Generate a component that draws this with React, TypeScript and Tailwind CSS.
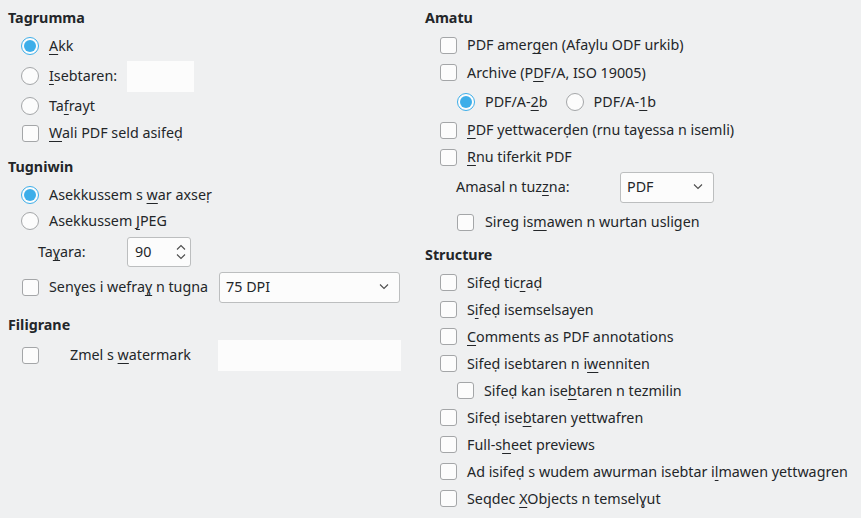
import React from "react";

// "&" marks the mnemonic letter, drawn underlined like a KDE dialog
function Label({ text, className = "" }: { text: string; className?: string }) {
  const i = text.indexOf("&");
  if (i < 0) return <span className={"whitespace-nowrap " + className}>{text}</span>;
  const chars = Array.from(text.slice(i + 1));
  return (
    <span className={"whitespace-nowrap " + className}>
      {text.slice(0, i)}
      <span className="underline decoration-1 underline-offset-[3px]">{chars[0]}</span>
      {chars.slice(1).join("")}
    </span>
  );
}

function Radio({ checked = false }: { checked?: boolean }) {
  return checked ? (
    <span className="flex h-[18px] w-[18px] items-center justify-center rounded-full border border-[#3daee9] bg-[#fcfcfc]">
      <span className="h-[12px] w-[12px] rounded-full bg-[#3daee9]" />
    </span>
  ) : (
    <span className="h-[18px] w-[18px] rounded-full border border-[#a4a6a8] bg-[#fcfcfc]" />
  );
}

function Check() {
  return <span className="h-[17px] w-[17px] rounded-[3px] border border-[#a4a6a8] bg-[#fcfcfc]" />;
}

function Slot({ children }: { children: React.ReactNode }) {
  return <span className="flex w-5 shrink-0 items-center justify-center">{children}</span>;
}

function Heading({ children, className = "" }: { children: React.ReactNode; className?: string }) {
  return <div className={"flex h-[28px] items-center font-bold " + className}>{children}</div>;
}

function Chevron({ up = false }: { up?: boolean }) {
  return (
    <svg width="10" height="6" viewBox="0 0 10 6" className="text-[#4d4d4d]">
      <path
        d={up ? "M1 5.5 L5 1.5 L9 5.5" : "M1 0.5 L5 4.5 L9 0.5"}
        fill="none"
        stroke="currentColor"
        strokeWidth="1.1"
      />
    </svg>
  );
}

function Combo({ value, className }: { value: string; className: string }) {
  return (
    <div
      className={
        "flex h-[31px] items-center justify-between rounded-[3px] border border-[#bcbebf] bg-[#fcfcfc] pl-[6px] pr-[10px] " +
        className
      }
    >
      <span>{value}</span>
      <Chevron />
    </div>
  );
}

function CheckRow({ text, indent = false, h = "h-[27px]" }: { text: string; indent?: boolean; h?: string }) {
  return (
    <div className={"flex items-center " + h + " " + (indent ? "pl-[30px]" : "pl-[13px]")}>
      <Slot>
        <Check />
      </Slot>
      <Label text={text} className="ml-[9px]" />
    </div>
  );
}

export default function App() {
  return (
    <div className="flex h-[518px] w-[861px] bg-[#eff0f1] pt-[4px] font-['Noto_Sans',sans-serif] text-[14.3px] text-[#232629]">
      {/* Left column */}
      <div className="ml-[8px] flex w-[393px] flex-col">
        <Heading>Tagrumma</Heading>
        <div className="flex h-[28px] items-center pl-[12px]">
          <Slot>
            <Radio checked />
          </Slot>
          <Label text="&Akk" className="ml-[9px]" />
        </div>
        <div className="flex h-[32px] items-center pl-[12px]">
          <Slot>
            <Radio />
          </Slot>
          <Label text="&Isebtaren:" className="ml-[9px]" />
          <div className="ml-[10px] h-[31px] w-[67px] bg-[#fcfcfc]" />
        </div>
        <div className="flex h-[28px] items-center pl-[12px]">
          <Slot>
            <Radio />
          </Slot>
          <Label text="Ta&frayt" className="ml-[9px]" />
        </div>
        <div className="flex h-[26px] items-center pl-[12px]">
          <Slot>
            <Check />
          </Slot>
          <Label text="&Wali PDF seld asifeḍ" className="ml-[9px]" />
        </div>

        <Heading className="mt-[7px]">Tugniwin</Heading>
        <div className="flex h-[28px] items-center pl-[12px]">
          <Slot>
            <Radio checked />
          </Slot>
          <Label text="Asekkussem s &war axseṛ" className="ml-[9px]" />
        </div>
        <div className="flex h-[24px] items-center pl-[12px]">
          <Slot>
            <Radio />
          </Slot>
          <Label text="Asekkussem &JPEG" className="ml-[9px]" />
        </div>
        <div className="flex h-[38px] items-center pl-[30px]">
          <Label text="Ta&ɣara:" className="w-[89px]" />
          <div className="flex h-[30px] w-[64px] items-center justify-between rounded-[3px] border border-[#bcbebf] bg-[#fcfcfc] pl-[7px] pr-[4px]">
            <span>90</span>
            <span className="flex flex-col gap-[4px]">
              <Chevron up />
              <Chevron />
            </span>
          </div>
        </div>
        <div className="flex h-[32px] items-center pl-[12px]">
          <Slot>
            <Check />
          </Slot>
          <Label text="Senɣes i wefra&ɣ n tugna" className="ml-[9px]" />
          <Combo value="75 DPI" className="ml-[11px] w-[181px]" />
        </div>

        <Heading className="mt-[8px]">Filigrane</Heading>
        <div className="flex h-[32px] items-center pl-[12px]">
          <Slot>
            <Check />
          </Slot>
          <Label text="Zmel s &watermark" className="ml-[30px] w-[148px]" />
          <div className="h-[31px] w-[183px] bg-[#fcfcfc]" />
        </div>
      </div>

      {/* Right column */}
      <div className="ml-[24px] flex flex-1 flex-col">
        <Heading>Amatu</Heading>
        <CheckRow text="PDF amer&gen (Afaylu ODF urkib)" h="h-[26px]" />
        <div className="flex h-[29px] items-center pl-[13px]">
          <Slot>
            <Check />
          </Slot>
          <Label text="Archive (P&DF/A, ISO 19005)" className="ml-[9px]" />
        </div>
        <div className="flex h-[30px] items-center pl-[31px]">
          <Slot>
            <Radio checked />
          </Slot>
          <Label text="PDF/A-&2b" className="ml-[9px]" />
          <span className="ml-[17px] flex items-center">
            <Slot>
              <Radio />
            </Slot>
            <Label text="PDF/A-&1b" className="ml-[9px]" />
          </span>
        </div>
        <div className="flex h-[26px] items-center pl-[13px]">
          <Slot>
            <Check />
          </Slot>
          <Label text="&PDF yettwacerḍen (rnu taɣessa n isemli)" className="ml-[9px]" />
        </div>
        <div className="flex h-[28px] items-center pl-[13px]">
          <Slot>
            <Check />
          </Slot>
          <Label text="&Rnu tiferkit PDF" className="ml-[9px]" />
        </div>
        <div className="flex h-[32px] items-center pl-[31px]">
          <Label text="Amasal n tuz&zna:" className="w-[164px]" />
          <Combo value="PDF" className="w-[94px]" />
        </div>
        <div className="mt-[6px] flex h-[26px] items-center pl-[30px]">
          <Slot>
            <Check />
          </Slot>
          <Label text="Sireg is&mawen n wurtan usligen" className="ml-[10px]" />
        </div>

        <Heading className="mt-[6px]">Structure</Heading>
        <CheckRow text="Sifeḍ tic&raḍ" />
        <CheckRow text="S&ifeḍ isemselsayen" />
        <CheckRow text="&Comments as PDF annotations" />
        <CheckRow text="Sifeḍ isebtaren n i&wenniten" />
        <CheckRow text="Sifeḍ kan ise&btaren n tezmilin" indent />
        <CheckRow text="Sifeḍ ise&btaren yettwafren" />
        <CheckRow text="Full-s&heet previews" />
        <CheckRow text="Ad isifeḍ s wudem awurman isebtar i&lmawen yettwagren" />
        <CheckRow text="Seqdec &XObjects n temselɣut" />
      </div>
    </div>
  );
}
